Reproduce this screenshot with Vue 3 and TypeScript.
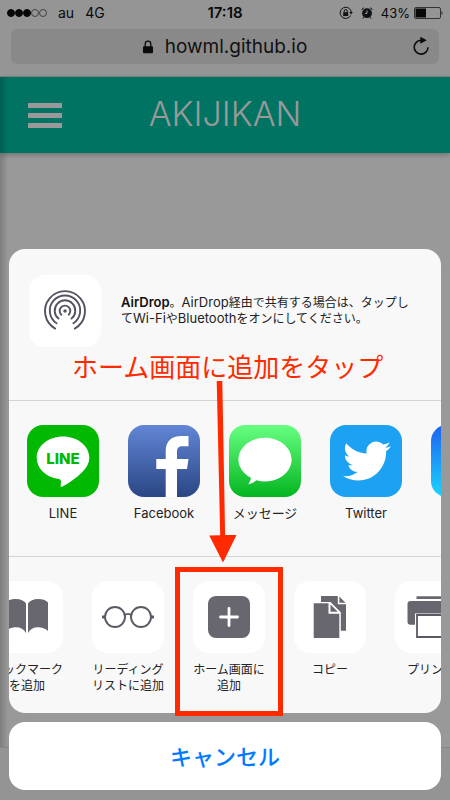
<script setup lang="ts">
import { ref } from 'vue'

type IconName =
  | 'line' | 'facebook' | 'messages' | 'twitter' | 'mail'
  | 'book' | 'glasses' | 'plus' | 'copy' | 'printer'

interface ShareItem {
  icon: IconName
  lines: string[]
}

const address = ref('howml.github.io')
const signal = [true, true, true, false, false]

const apps: ShareItem[] = [
  { icon: 'line', lines: ['LINE'] },
  { icon: 'facebook', lines: ['Facebook'] },
  { icon: 'messages', lines: ['メッセージ'] },
  { icon: 'twitter', lines: ['Twitter'] },
  { icon: 'mail', lines: ['メール'] },
]

const actions: ShareItem[] = [
  { icon: 'book', lines: ['ブックマーク', 'を追加'] },
  { icon: 'glasses', lines: ['リーディング', 'リストに追加'] },
  { icon: 'plus', lines: ['ホーム画面に', '追加'] },
  { icon: 'copy', lines: ['コピー'] },
  { icon: 'printer', lines: ['プリント'] },
]
</script>

<template>
  <div class="screen">
    <div class="browser">
      <div class="status">
        <div class="status-side">
          <span class="dots">
            <i v-for="(on, i) in signal" :key="i" class="dot" :class="{ on }"></i>
          </span>
          <span>au</span>
          <span>4G</span>
        </div>
        <span class="clock">17:18</span>
        <div class="status-side end">
          <svg width="14" height="14" viewBox="0 0 14 14" fill="none" stroke="#111">
            <path d="M11.7 9.5A5.6 5.6 0 1 1 12.3 6" />
            <path d="M10.4 6h3.4L12.1 8.6z" fill="#111" stroke="none" />
            <rect x="4.2" y="6.2" width="5" height="3.8" fill="#111" stroke="none" />
            <path d="M5.2 6.4V5a1.5 1.5 0 0 1 3 0v1.4" />
          </svg>
          <svg width="12" height="12" viewBox="0 0 12 12" fill="none" stroke="#111">
            <circle cx="6" cy="6.2" r="4.9" fill="#111" stroke="none" />
            <path d="M.8 3A3 3 0 0 1 3 .8M11.2 3A3 3 0 0 0 9 .8M2.8 10.2l-1 1.4M9.2 10.2l1 1.4" />
            <path d="M6 3.4v3H3.8" stroke="#999" />
          </svg>
          <span class="charge">
            43%
            <svg width="29" height="12" viewBox="0 0 29 12">
              <rect x=".5" y=".5" width="26" height="11" rx="1.5" fill="none" stroke="#333" />
              <rect x="1.5" y="1.5" width="10.5" height="9" fill="#080808" />
              <path d="M27.5 4c1.4.5 1.4 3.500 0 4z" fill="#222" />
            </svg>
          </span>
        </div>
      </div>
      <div class="address">
        <svg width="10" height="14" viewBox="0 0 10 14">
          <path d="M2.200 7V4a2.800 2.800 0 0 1 5.600 0v3" fill="none" stroke="#0b0b0b" stroke-width="1.300" />
          <rect y="6.300" width="10" height="7" rx="1" fill="#0b0b0b" />
        </svg>
        <input v-model="address" type="text" aria-label="アドレス" />
        <button class="reload" type="button" aria-label="再読み込み">
          <svg width="18" height="20" viewBox="0 0 18 20">
            <path d="M8.500 4.300A6.900 6.900 0 1 0 15 11.200" fill="none" stroke="#0d0d0d" stroke-width="1.600" />
            <path d="M7.300.8l6.500 3.500-6.500 3.500z" fill="#0d0d0d" />
          </svg>
        </button>
      </div>
    </div>

    <main class="page">
      <header class="topbar">
        <button class="menu" type="button" aria-label="メニュー"><i></i><i></i><i></i></button>
        <h1>AKIJIKAN</h1>
      </header>
    </main>
    <div class="toolbar"></div>

    <div class="overlay">
      <div class="share">
        <div class="sheet">
          <section class="airdrop">
            <span class="tile">
              <svg viewBox="0 0 72 72" fill="none" stroke="#555361" stroke-width="1.900" stroke-linecap="round">
                <path d="M26.200 53.600a20 20 0 1 1 19.600 0" />
                <path d="M27.600 48.300a15.200 15.200 0 1 1 16.800 0" />
                <path d="M29.500 43.600a10.300 10.300 0 1 1 13 0" />
                <path d="M32.300 39.700a5.300 5.300 0 1 1 7.400 0" />
                <circle cx="36" cy="36" r="1.700" fill="#555361" stroke="none" />
              </svg>
            </span>
            <p><b>AirDrop</b>。<span class="latin">AirDrop</span>経由で共有する場合は、タップし<br />て<span class="latin">Wi-Fi</span>や<span class="latin">Bluetooth</span>をオンにしてください。</p>
          </section>

          <section class="row apps">
            <button v-for="item in apps" :key="item.icon" class="item" type="button">
              <span class="tile" :class="item.icon">
                <svg v-if="item.icon === 'line'" viewBox="0 0 72 72">
                  <path d="M36 11.500C50.500 11.500 62.300 21 62.300 32.500c0 5.500-2.700 10.200-7 14.500-5.500 5.700-13 11-20.300 14.700-2 .8-1.200-2.200-1-4.500.2-2.400-.8-3-3.500-3.400C18.500 51.800 9.700 43.500 9.700 32.500 9.700 21 21.500 11.500 36 11.500z" fill="#fff" />
                  <text x="36" y="38.500" text-anchor="middle" class="line-word">LINE</text>
                </svg>
                <svg v-else-if="item.icon === 'facebook'" viewBox="0 0 72 72">
                  <path d="M37.700 72V44h-9.400V34h9.400v-8C37.700 16 44 11 53 11h7.500v10.300H55c-4.500 0-6 1.700-6 5.700v7h11.500L59 44H49v28z" fill="#fff" />
                </svg>
                <svg v-else-if="item.icon === 'messages'" viewBox="0 0 72 72">
                  <path d="M36 12.700c14.700 0 26.600 9.800 26.600 21.900S50.700 56.500 36 56.500c-3 0-6-.4-8.700-1.200-2.300 2.200-5.300 3.700-8.300 4 1.700-1.800 2.700-4 2.900-6.500C14.400 49 9.400 42.200 9.400 34.600 9.400 22.500 21.300 12.700 36 12.700z" fill="#fff" />
                </svg>
                <svg v-else-if="item.icon === 'twitter'" viewBox="0 0 72 72">
                  <path transform="translate(13 12) scale(2)" fill="#fff" d="M23.953 4.570a10 10 0 01-2.825.775 4.958 4.958 0 002.163-2.723c-.951.555-2.005.959-3.127 1.184a4.920 4.920 0 00-8.384 4.482C7.690 8.095 4.067 6.130 1.640 3.162a4.822 4.822 0 00-.666 2.475c0 1.710.870 3.213 2.188 4.096a4.904 4.904 0 01-2.228-.616v.060a4.923 4.923 0 003.946 4.827 4.996 4.996 0 01-2.212.085 4.936 4.936 0 004.604 3.417 9.867 9.867 0 01-6.102 2.105c-.390 0-.779-.023-1.170-.067a13.995 13.995 0 007.557 2.209c9.053 0 13.998-7.496 13.998-13.985 0-.210 0-.420-.015-.630A9.935 9.935 0 0024 4.590z" />
                </svg>
              </span>
              <span class="label"><span v-for="l in item.lines" :key="l">{{ l }}</span></span>
            </button>
          </section>

          <section class="row actions">
            <button v-for="item in actions" :key="item.icon" class="item" type="button">
              <span class="tile">
                <svg v-if="item.icon === 'book'" viewBox="0 0 72 72" fill="#686770">
                  <path d="M37 22.500C39 19.500 42.500 18 47 18c4.500 0 8 1 10 3.500V50c-3-2.700-6-3.800-10-3.800-4.500 0-8 2-10 5.800z" />
                  <path d="M35 22.500C33 19.500 29.500 18 25 18c-4.500 0-8 1-10 3.500V50c3-2.700 6-3.800 10-3.800 4.500 0 8 2 10 5.800z" />
                </svg>
                <svg v-else-if="item.icon === 'glasses'" viewBox="0 0 72 72" fill="none" stroke="#5b5964" stroke-width="1.900">
                  <circle cx="23" cy="36" r="10" />
                  <circle cx="49" cy="36" r="10" />
                  <path d="M32.800 34.500c1.500-2.200 4.900-2.200 6.400 0" />
                  <path d="M10 36h3M59 36h3" stroke-width="3" />
                </svg>
                <svg v-else-if="item.icon === 'plus'" viewBox="0 0 72 72">
                  <rect x="15" y="15" width="42" height="42" rx="8" fill="#686770" />
                  <path d="M36 27.500v17M27.500 36h17" stroke="#fff" stroke-width="2.800" stroke-linecap="round" />
                </svg>
                <svg v-else-if="item.icon === 'copy'" viewBox="0 0 72 72" fill="#686770">
                  <path d="M27 15h16.800v8.300H52v26.400H27z" />
                  <path d="M45.300 15.500l6.200 6.300h-6.200z" />
                  <path d="M18.500 21h18l10.300 10.300V58.500H18.500z" fill="#fff" />
                  <path d="M19.700 22.300h14.800V32.800h10.800V57H19.700z" />
                  <path d="M36.500 23.500l7.300 7.300h-7.300z" />
                </svg>
                <svg v-else viewBox="0 0 72 72" fill="#686770">
                  <path d="M21.500 15.300h29V18h-29z" />
                  <rect x="12.500" y="20" width="47" height="23.700" rx="3" />
                  <path d="M20 32.500h32V44H20z" fill="#fff" />
                  <path d="M22 34h28v22H22z" fill="#fff" stroke="#5b5964" stroke-width="1.800" />
                </svg>
              </span>
              <span class="label"><span v-for="l in item.lines" :key="l">{{ l }}</span></span>
            </button>
          </section>
        </div>

        <p class="callout">ホーム画面に追加をタップ</p>
        <svg class="arrow" width="28" height="182" viewBox="0 0 28 182" fill="#ff2a00">
          <path d="M7.700 0h5.600l2.800 154h11.400L14 181.500.2 154.500l11-.2z" />
        </svg>
        <div class="highlight"></div>
      </div>
      <button class="cancel" type="button">キャンセル</button>
    </div>
  </div>
</template>

<style>
body {
  margin: 0;
}
</style>

<style scoped>
.screen {
  position: relative;
  display: flex;
  flex-direction: column;
  min-height: 100vh;
  overflow: hidden;
  background: #999;
  color: #000;
  font-family: Inter, "Noto Sans CJK JP", sans-serif;
}
button {
  margin: 0;
  padding: 0;
  border: 0;
  background: none;
  color: inherit;
  font: inherit;
}
h1, p {
  margin: 0;
}
.browser {
  display: flex;
  flex-direction: column;
  gap: 4px;
  height: 76px;
  background: #959595;
  border-bottom: 1px solid #7d8582;
}
.status {
  display: grid;
  grid-template-columns: 1fr auto 1fr;
  align-items: center;
  height: 25px;
  padding: 0 7px;
  font-size: 14px;
  color: #0a0a0a;
}
.status-side {
  display: flex;
  align-items: center;
  gap: 11px;
}
.status-side.end {
  justify-content: flex-end;
  gap: 8px;
}
.charge {
  display: flex;
  align-items: center;
  gap: 4px;
  font-size: 13px;
}
.dots {
  display: flex;
}
.dot {
  box-sizing: border-box;
  width: 8px;
  height: 8px;
  border: 1px solid #444;
  border-radius: 50%;
}
.dot.on {
  background: #080808;
  border-color: #080808;
}
.clock {
  font-size: 15px;
  font-weight: 600;
}
.address {
  position: relative;
  display: flex;
  align-items: center;
  justify-content: center;
  gap: 12px;
  height: 35px;
  margin: 0 11px;
  border-radius: 6px;
  background: #898989;
}
.address input {
  field-sizing: content;
  padding: 0;
  border: 0;
  outline: 0;
  background: none;
  color: #111;
  font: 19px Inter, sans-serif;
}
.reload {
  position: absolute;
  right: 8px;
  top: 7px;
  display: flex;
}
.page {
  flex: 1;
  display: flex;
  flex-direction: column;
  position: relative;
}
.page::after {
  content: "";
  position: absolute;
  inset: 0 auto 0 0;
  width: 8px;
  background: linear-gradient(90deg, rgba(0, 0, 0, 0.18), transparent);
}
.topbar {
  display: grid;
  grid-template-columns: 1fr auto 1fr;
  align-items: center;
  height: 76px;
  padding: 0 28px;
  background: #007362;
  box-shadow: 0 2px 5px rgba(0, 0, 0, 0.25);
}
.menu {
  display: flex;
  flex-direction: column;
  gap: 5px;
  width: 34px;
}
.menu i {
  height: 5px;
  background: #999;
}
h1 {
  color: #999;
  font-family: Inter, sans-serif;
  font-size: 34px;
  font-weight: 300;
  line-height: 40px;
  padding-bottom: 2px;
}
.toolbar {
  height: 52px;
  border-top: 1px solid #868686;
  background: #949494;
}
.overlay {
  position: absolute;
  inset: 0;
  display: flex;
  flex-direction: column;
  justify-content: flex-end;
  gap: 9px;
  padding: 0 9px 10px;
}
.share {
  position: relative;
}
.sheet {
  overflow: hidden;
  border-radius: 16px;
  background: #f8f8f8;
}
.airdrop {
  display: flex;
  align-items: center;
  gap: 20px;
  padding: 26px 20px 53px;
}
.airdrop p {
  flex: 1;
  font-size: 12px;
  line-height: 16px;
  color: #222;
}
.airdrop b,
.latin {
  font-size: 13px;
  line-height: 1;
}
.airdrop b {
  font-weight: 600;
  color: #111;
}
.tile {
  flex: none;
  display: block;
  width: 72px;
  height: 72px;
  overflow: hidden;
  border-radius: 16px;
  background: #fff;
}
.tile svg {
  display: block;
  width: 100%;
}
.tile.line {
  background: #00b900;
}
.tile.facebook {
  background: linear-gradient(#6286d6, #2a4684);
}
.tile.messages {
  background: linear-gradient(#67ff81, #04b51f);
}
.tile.twitter {
  background: #1da1f2;
}
.tile.mail {
  background: linear-gradient(#1d62f0, #1ad5fd);
}
.line-word {
  fill: #00b900;
  font: 800 15px Inter, sans-serif;
}
.row {
  display: flex;
  gap: 29px;
  border-top: 1px solid #d3d3d8;
}
.apps {
  padding: 24px 0 34px 18px;
}
.actions {
  padding: 24px 0 19px;
  margin-left: -18px;
}
.item {
  flex: none;
  display: flex;
  flex-direction: column;
  align-items: center;
  gap: 8px;
  width: 72px;
}
.actions .item {
  gap: 9px;
}
.label {
  display: flex;
  flex-direction: column;
  align-items: center;
  white-space: nowrap;
  font-size: 12px;
  line-height: 16px;
  color: #222;
}
.apps .label {
  font-size: 13px;
  line-height: 17px;
}
.callout {
  position: absolute;
  top: 100px;
  left: 0;
  right: 0;
  padding-left: 63px;
  white-space: nowrap;
  font-size: 26px;
  line-height: 38px;
  color: #ff2a00;
}
.arrow {
  position: absolute;
  top: 132px;
  left: 200px;
}
.highlight {
  position: absolute;
  box-sizing: border-box;
  left: 166px;
  bottom: -3px;
  width: 108px;
  height: 149px;
  border: 5px solid #ff2a00;
}
.cancel {
  height: 68px;
  padding-bottom: 2px;
  border-radius: 16px;
  background: #fff;
  color: #007aff;
  font-size: 22px;
  font-weight: 500;
}
</style>
